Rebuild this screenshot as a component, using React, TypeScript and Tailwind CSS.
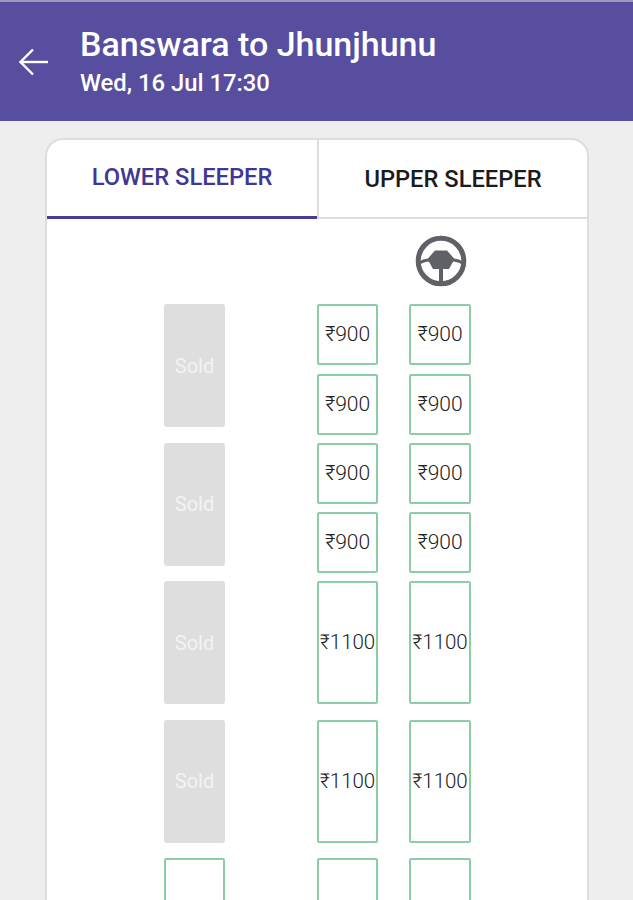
import React from 'react';

const font = { fontFamily: "Roboto, 'Noto Sans', sans-serif" };

const Seat = ({ price, tall, wide }: { price?: string; tall?: boolean; wide?: boolean }) => (
  <div
    className={`${wide ? 'w-[62px]' : 'w-[61px]'} ${tall ? 'h-[123px]' : 'h-[61px]'} flex items-center justify-center rounded-[2px] border-2 border-[#8ccda6] text-[#222222] ${tall ? 'text-[20.5px]' : 'text-[21px]'} font-light leading-none whitespace-nowrap`}
  >
    {price}
  </div>
);

const Sold = () => (
  <div className="w-[61px] h-[123px] flex items-center justify-center rounded-[3px] bg-[#dedede] text-[#f3f3f3] text-[20px]">
    Sold
  </div>
);

const ShortPair = ({ wide }: { wide?: boolean }) => (
  <div className="flex flex-col gap-[8.5px]">
    <Seat price="₹900" wide={wide} />
    <Seat price="₹900" wide={wide} />
  </div>
);

const Row = ({ left, tall, empty }: { left: React.ReactNode; tall?: boolean; empty?: boolean }) => (
  <div className="h-[138.5px] flex shrink-0">
    <div className="w-[153px] shrink-0">{left}</div>
    <div className="w-[92px] shrink-0">
      {tall ? <Seat price={empty ? undefined : '₹1100'} tall /> : <ShortPair />}
    </div>
    <div className="w-[62px] shrink-0">
      {tall ? <Seat price={empty ? undefined : '₹1100'} tall wide /> : <ShortPair wide />}
    </div>
  </div>
);

const SteeringWheel = () => (
  <svg width="52" height="52" viewBox="0 0 52 52" fill="none">
    <circle cx="26" cy="26" r="22.8" stroke="#5f6166" strokeWidth="5" />
    <path d="M3.5 29 Q 8 25 15 25 M48.5 29 Q 44 25 37 25" stroke="#5f6166" strokeWidth="3" />
    <path d="M26 33 V47" stroke="#5f6166" strokeWidth="4" />
    <path d="M20 15.5 H32 L39.5 24 L34 34 H18 L12.5 24 Z" fill="#5f6166" />
  </svg>
);

export default function App() {
  return (
    <div className="w-[633px] h-[900px] overflow-hidden bg-[#eeeeee] flex flex-col" style={font}>
      <header className="h-[121px] shrink-0 bg-[#574ea0] border-t-2 border-[#9c98bd] flex items-center text-white">
        <div className="w-[80px] shrink-0 pl-[19px] pt-[1px]">
          <svg width="30" height="28" viewBox="0 0 30 28" fill="none" stroke="white" strokeWidth="2.4">
            <path d="M29 14 H2" />
            <path d="M14 1.5 L1.5 14 L14 26.5" />
          </svg>
        </div>
        <div className="flex flex-col">
          <div className="text-[34px] leading-[38px] font-medium">Banswara to Jhunjhunu</div>
          <div className="text-[23.8px] leading-[30px] font-medium mt-[5px]">Wed, 16 Jul 17:30</div>
        </div>
      </header>

      <div className="mt-[17px] ml-[45px] w-[544px] grow bg-white border-2 border-b-0 border-[#dddddd] rounded-t-[18px] flex flex-col overflow-hidden">
        <div className="h-[79px] shrink-0 flex">
          <div className="w-[270px] shrink-0 border-b-[3px] border-[#463c9b] flex items-center justify-center text-[#3f3795] text-[23.7px] font-medium">
            LOWER SLEEPER
          </div>
          <div className="grow border-l-2 border-b-2 border-[#dddddd] flex items-center justify-center pt-[3px] text-[#1b1b1b] text-[23.7px] font-medium">
            UPPER SLEEPER
          </div>
        </div>

        <div className="h-[84px] shrink-0 pl-[368px] pt-[16px]">
          <SteeringWheel />
        </div>

        <div className="pt-[1px] pl-[117px] flex flex-col">
          <Row left={<Sold />} />
          <Row left={<Sold />} />
          <Row left={<Sold />} tall />
          <Row left={<Sold />} tall />
          <Row left={<Seat tall />} tall empty />
        </div>
      </div>
    </div>
  );
}
